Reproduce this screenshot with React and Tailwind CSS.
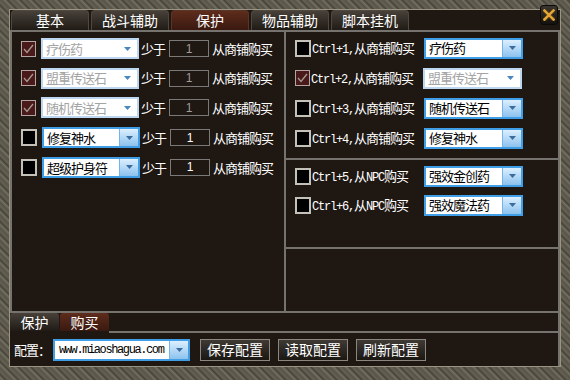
import React from 'react';

const cjk = "font-['Noto_Sans_CJK_SC',sans-serif]";
const mono = "font-['Liberation_Mono',monospace]";

const leftRows = [
  { item: '疗伤药', checked: true, enabled: false },
  { item: '盟重传送石', checked: true, enabled: false },
  { item: '随机传送石', checked: true, enabled: false },
  { item: '修复神水', checked: false, enabled: true },
  { item: '超级护身符', checked: false, enabled: true },
];

const shopRows = [
  { key: '1', item: '疗伤药', checked: false, enabled: true },
  { key: '2', item: '盟重传送石', checked: true, enabled: false },
  { key: '3', item: '随机传送石', checked: false, enabled: true },
  { key: '4', item: '修复神水', checked: false, enabled: true },
];

const npcRows = [
  { key: '5', item: '强效金创药' },
  { key: '6', item: '强效魔法药' },
];

const Triangle = ({ dim }) => (
  <svg width="7" height="4" viewBox="0 0 7 4">
    <polygon points="0,0 7,0 3.5,4" fill={dim ? '#4a86c0' : '#3a6c9c'} />
  </svg>
);

const Check = ({ checked }) =>
  checked ? (
    <div className="w-[15px] h-[16px] shrink-0 border border-[#b5a5a2] bg-[#4a1919] flex items-center justify-center">
      <svg width="11" height="10" viewBox="0 0 11 10">
        <polyline points="1,5 4,8.5 10,1" fill="none" stroke="#a59a92" strokeWidth="1.3" />
      </svg>
    </div>
  ) : (
    <div className="w-[16px] h-[17px] shrink-0 border-2 border-[#c4c1b8] bg-black" />
  );

const Select = ({ value, enabled, width }) => (
  <div
    className={`flex shrink-0 h-[21px] ${width} border-2 bg-white ${
      enabled ? 'border-[#3f9ee6]' : 'border-[#bcd7ef]'
    }`}
  >
    <div
      className={`flex-1 flex items-center pl-[3px] ${cjk} text-[13px] tracking-[-1px] ${
        enabled ? 'text-black' : 'text-[#a4a4a4]'
      }`}
    >
      {value}
    </div>
    <div
      className={`w-[19px] flex items-center justify-center ${
        enabled ? 'bg-gradient-to-b from-[#dcefff] to-[#8cc2ee] border-l border-[#74b4ea]' : ''
      }`}
    >
      <Triangle dim={!enabled} />
    </div>
  </div>
);

const TopTab = ({ label, active }) => (
  <div
    className={`w-[78px] h-[20px] rounded-t-[4px] border-t border-x flex items-center justify-center ${cjk} text-[14px] text-white ${
      active
        ? 'bg-gradient-to-b from-[#5e2c1c] to-[#3a1910] border-[#5a3426]'
        : 'bg-gradient-to-b from-[#47413a] to-[#211b16] border-[#4e4841]'
    }`}
  >
    {label}
  </div>
);

const BottomTab = ({ label, active }) => (
  <div
    className={`w-[49px] h-[18px] shrink-0 rounded-t-[3px] flex items-center justify-center ${cjk} text-[14px] text-white ${
      active
        ? 'bg-gradient-to-b from-[#5e2c1c] to-[#3a1910]'
        : 'bg-gradient-to-b from-[#47413a] to-[#211b16]'
    }`}
  >
    {label}
  </div>
);

const Button = ({ label }) => (
  <div
    className={`w-[70px] h-[22px] shrink-0 border border-[#8b8680] bg-gradient-to-b from-[#3f3a34] to-[#1b1713] flex items-center justify-center ${cjk} text-[14px] text-white`}
  >
    {label}
  </div>
);

const LeftRow = ({ item, checked, enabled }) => (
  <div className="flex items-center h-[21px]">
    <div className="ml-[9px]">
      <Check checked={checked} />
    </div>
    <div className="ml-[5px]">
      <Select value={item} enabled={enabled} width="w-[98px]" />
    </div>
    <span className={`ml-[2px] ${cjk} text-[13px] tracking-[-1px] text-white`}>少于</span>
    <div
      className={`ml-[4px] w-[40px] h-[17px] border border-[#7c7a78] flex items-center justify-center font-['Liberation_Sans',sans-serif] text-[12px] ${
        enabled ? 'text-white' : 'text-[#a09c98]'
      }`}
    >
      1
    </div>
    <span className={`ml-[3px] ${cjk} text-[13px] tracking-[-1px] text-white`}>从商铺购买</span>
  </div>
);

const HotkeyRow = ({ k, item, checked, enabled, npc }) => (
  <div className="flex items-center h-[22px]">
    <div className="ml-[9px]">
      <Check checked={checked} />
    </div>
    <div className="ml-[1px] w-[112px] shrink-0 flex items-baseline text-white whitespace-nowrap">
      <span className={`${mono} text-[12px] tracking-[-1.2px]`}>Ctrl+{k},</span>
      {npc ? (
        <>
          <span className={`${cjk} text-[13px] tracking-[-1px]`}>从</span>
          <span className={`${mono} text-[12px] tracking-[-1.2px]`}>NPC</span>
          <span className={`${cjk} text-[13px] tracking-[-1px]`}>购买</span>
        </>
      ) : (
        <span className={`${cjk} text-[13px] tracking-[-1px]`}>从商铺购买</span>
      )}
    </div>
    <Select value={item} enabled={enabled} width="w-[99px]" />
  </div>
);

export default function App() {
  return (
    <div className="relative w-[570px] h-[380px] pt-[10px] px-[10px] pb-[14px] bg-[repeating-linear-gradient(45deg,#5b574a_0px,#737060_2px,#45423a_4px,#666152_6px,#56524a_9px)]">
      <div className="h-full flex flex-col bg-[#1e1712] ring-1 ring-[#9a9484]">
        <div className="h-[20px] flex items-end gap-[2px] pl-[1px]">
          <TopTab label="基本" />
          <TopTab label="战斗辅助" />
          <TopTab label="保护" active />
          <TopTab label="物品辅助" />
          <TopTab label="脚本挂机" />
        </div>

        <div className="h-[283px] flex border-2 border-[#76726d]">
          <div className="w-[274px] shrink-0 border-r-2 border-[#76726d] flex flex-col gap-[8.7px] pt-[6px]">
            {leftRows.map((r) => (
              <LeftRow key={r.item} {...r} />
            ))}
          </div>
          <div className="flex-1 flex flex-col">
            <div className="h-[128px] flex flex-col gap-[8px] pt-[5px] border-b-2 border-[#76726d]">
              {shopRows.map((r) => (
                <HotkeyRow key={r.key} k={r.key} item={r.item} checked={r.checked} enabled={r.enabled} />
              ))}
            </div>
            <div className="h-[89px] flex flex-col gap-[7px] pt-[5px] border-b-2 border-[#76726d]">
              {npcRows.map((r) => (
                <HotkeyRow key={r.key} k={r.key} item={r.item} checked={false} enabled npc />
              ))}
            </div>
            <div className="flex-1" />
          </div>
        </div>

        <div className="h-[20px] flex items-stretch">
          <BottomTab label="保护" />
          <div className="w-[1px]" />
          <BottomTab label="购买" active />
          <div className="flex-1 border-b-2 border-r-2 border-[#76726d]" />
        </div>

        <div className="flex-1 flex items-center pl-[4px] border-r-2 border-[#76726d]">
          <span className={`${cjk} text-[13px] tracking-[-1px] text-white`}>配置：</span>
          <div className="ml-[3px] w-[137px] h-[22px] flex border-2 border-[#3f9ee6] bg-white">
            <div className={`flex-1 flex items-center pl-[4px] ${mono} text-[12px] tracking-[-1.4px] text-black`}>
              www.miaoshagua.com
            </div>
            <div className="w-[19px] flex items-center justify-center bg-gradient-to-b from-[#dcefff] to-[#8cc2ee] border-l border-[#74b4ea]">
              <Triangle />
            </div>
          </div>
          <div className="ml-[10px] flex gap-[8px]">
            <Button label="保存配置" />
            <Button label="读取配置" />
            <Button label="刷新配置" />
          </div>
        </div>
      </div>

      <div className="absolute top-[5px] right-[12px] w-[18px] h-[20px] rounded-[3px] bg-gradient-to-b from-[#3a3631] to-[#141210] border border-[#0c0a08] flex items-center justify-center">
        <svg width="12" height="12" viewBox="0 0 12 12">
          <path d="M1.5 1.5 L10.5 10.5 M10.5 1.5 L1.5 10.5" stroke="#5a3a10" strokeWidth="4" strokeLinecap="square" />
          <path d="M1.5 1.5 L10.5 10.5 M10.5 1.5 L1.5 10.5" stroke="#e4a83a" strokeWidth="2.4" strokeLinecap="square" />
        </svg>
      </div>
    </div>
  );
}
